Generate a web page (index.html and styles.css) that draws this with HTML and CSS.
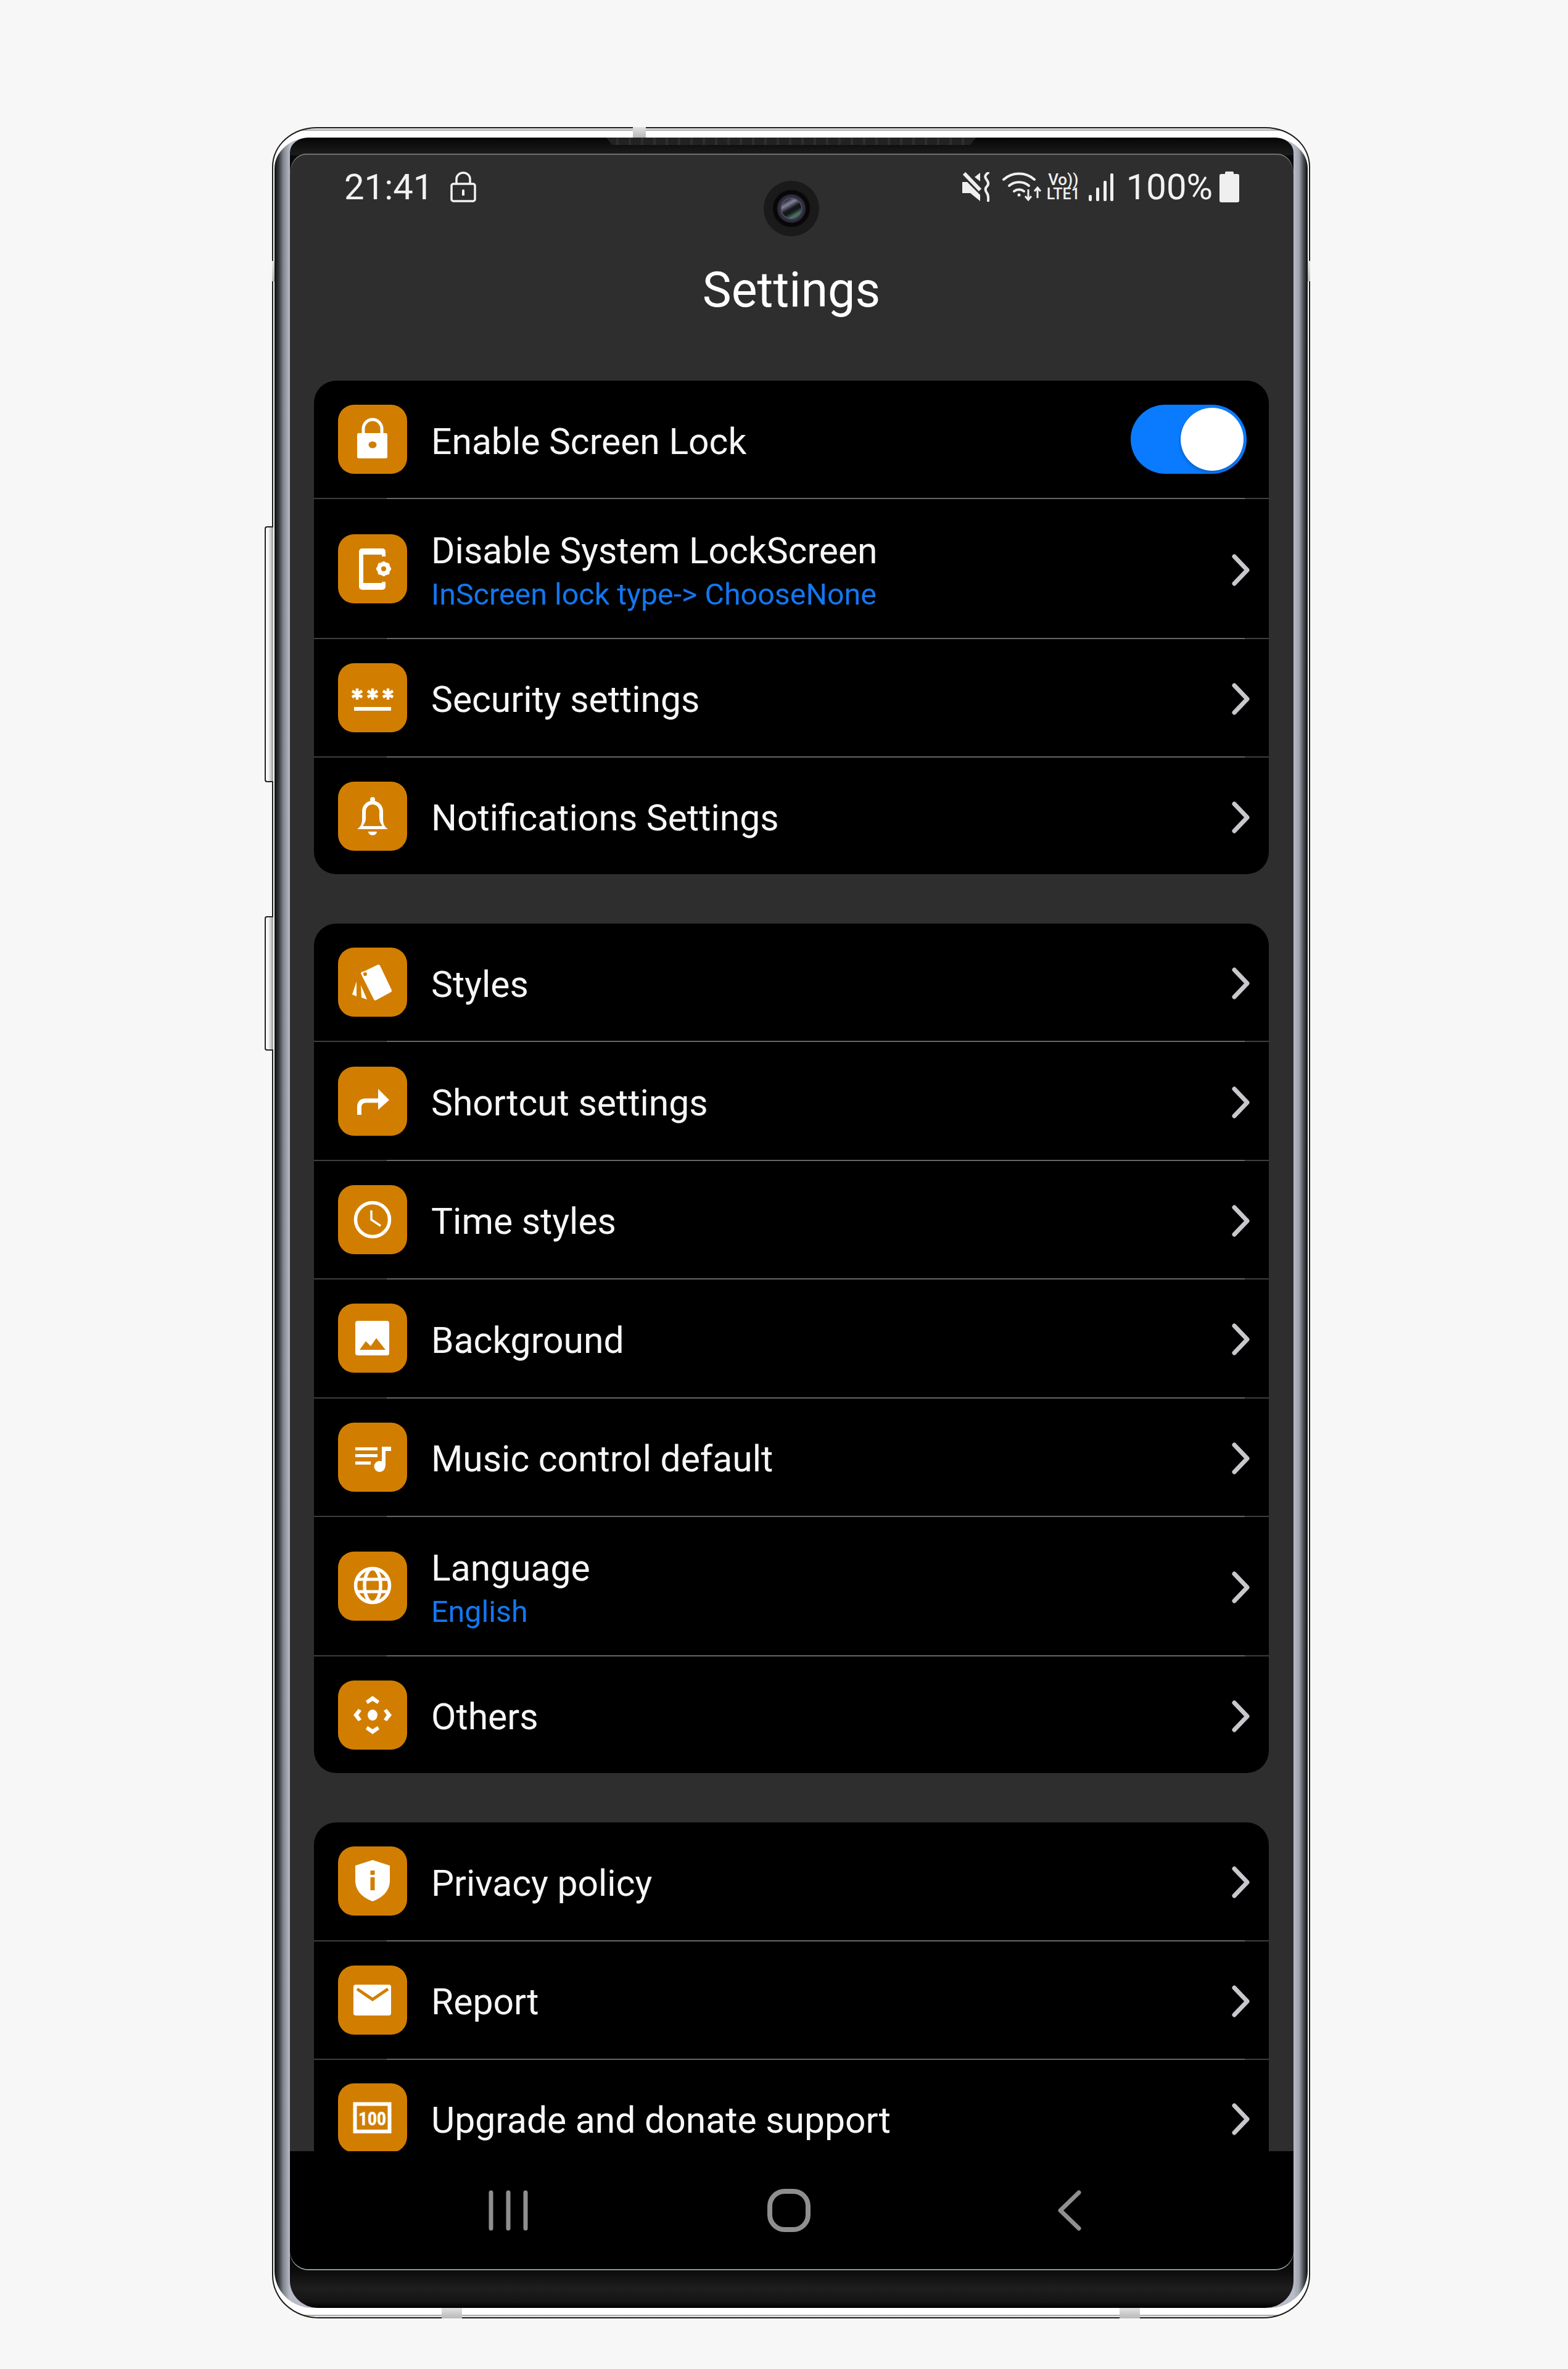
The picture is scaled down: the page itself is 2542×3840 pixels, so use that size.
FILE: index.html
```html
<!DOCTYPE html>
<html lang="en">
<head>
    <meta charset="UTF-8">
    <meta name="viewport" content="width=device-width, initial-scale=1.0">
    <title>Settings</title>
    <link rel="stylesheet" href="styles.css">
</head>
<body>
    <div class="page">
        <div class="phone">
            <!-- Side buttons and antenna bands -->
            <div class="side-btn side-btn-power"></div>
            <div class="side-btn side-btn-volume"></div>
            <div class="band band-top"></div>
            <div class="band band-left"></div>
            <div class="band band-right"></div>
            <div class="band band-bottom-a"></div>
            <div class="band band-bottom-b"></div>
            <div class="speaker"></div>

            <div class="bezel">
                <div class="screen">
                    <div class="camera"></div>

                    <div class="content">
                        <!-- Status bar -->
                        <div class="status-bar">
                            <div class="status-left">
                                <span class="status-text time">21:41</span>
                                <svg class="status-lock" width="42" height="50" viewBox="0 0 42 50" fill="none" stroke="#f2f2f2" stroke-width="3.5">
                                    <rect x="2" y="20" width="38" height="28" rx="3"/>
                                    <path d="M10 20V12a11 10 0 0 1 22 0v8"/>
                                    <path d="M21 31v8" stroke-width="4"/>
                                    <circle cx="21" cy="31" r="2" fill="#f2f2f2" stroke="none"/>
                                </svg>
                            </div>
                            <div class="status-right">
                                <svg class="status-mute" width="46" height="48" viewBox="0 0 46 48">
                                    <path d="M0 16h8L29 37v10L13 34H0z" fill="#efefef"/>
                                    <path d="M3 2L29 29" stroke="#efefef" stroke-width="6"/>
                                    <path d="M20 8l9-7v14z" fill="#efefef"/>
                                    <path d="M42 1c-7 5-5 8-2 12s3 7 0 10-3 7 0 11 2 8 2 13" fill="none" stroke="#efefef" stroke-width="4" stroke-linecap="round"/>
                                </svg>
                                <svg class="status-wifi" width="64" height="48" viewBox="0 0 64 48" fill="none" stroke="#efefef" stroke-width="4" stroke-linecap="round">
                                    <path d="M2 12a38 38 0 0 1 50 0"/>
                                    <path d="M11 22a25 25 0 0 1 32 0"/>
                                    <path d="M19 31a13 13 0 0 1 16 0"/>
                                    <circle cx="27" cy="37" r="2.5" fill="#efefef" stroke="none"/>
                                    <path d="M42 28v17M37 39l5 6 5-6M57 42V26M52 31l5-6 5 6" stroke-width="3" stroke-linecap="butt"/>
                                </svg>
                                <div class="status-net">
                                    <span class="net-vo">Vo))</span>
                                    <span class="net-lte">LTE1</span>
                                </div>
                                <svg class="status-signal" width="41" height="46" viewBox="0 0 41 46" fill="#efefef">
                                    <rect x="0" y="36" width="5" height="10" rx="2"/>
                                    <rect x="12" y="24" width="5" height="22" rx="2"/>
                                    <rect x="24" y="13" width="5" height="33" rx="2"/>
                                    <rect x="35" y="1" width="5" height="45" rx="2"/>
                                </svg>
                                <span class="status-text percent">100%</span>
                                <svg class="status-battery" width="32" height="50" viewBox="0 0 32 50" fill="#efefef">
                                    <rect x="9" y="0" width="14" height="6" rx="2"/>
                                    <rect x="0" y="4" width="32" height="46" rx="3"/>
                                </svg>
                            </div>
                        </div>

                        <h1 class="page-title">Settings</h1>

                        <!-- Lock group -->
                        <div class="card">
                            <div class="row">
                                <div class="tile">
                                    <svg width="112" height="112" viewBox="0 0 112 112" fill="#fff">
                                        <path d="M34 46h43a3 3 0 0 1 3 3v35a3 3 0 0 1-3 3H34a3 3 0 0 1-3-3V49a3 3 0 0 1 3-3z"/>
                                        <path d="M41 46V39a15 15 0 0 1 30 0v7" fill="none" stroke="#fff" stroke-width="5"/>
                                        <ellipse cx="56" cy="65" rx="6.5" ry="5.5" fill="#d17e00"/>
                                    </svg>
                                </div>
                                <div class="row-text"><div class="row-title">Enable Screen Lock</div></div>
                                <div class="toggle"><div class="toggle-knob"></div></div>
                            </div>
                            <div class="divider"></div>
                            <div class="row row-tall">
                                <div class="tile">
                                    <svg width="112" height="112" viewBox="0 0 112 112" fill="#fff">
                                        <path d="M39 23h33a5 5 0 0 1 5 5v8h-6v-3H41v46h30v-2h6v8a5 5 0 0 1-5 5H39a5 5 0 0 1-5-5V28a5 5 0 0 1 5-5z"/>
                                        <circle cx="74" cy="56" r="8" fill="none" stroke="#fff" stroke-width="6"/>
                                        <path d="M74 44v24M62 56h24M65.500 47.500l17 17M65.500 64.500l17-17" stroke="#fff" stroke-width="4" fill="none"/>
                                        <circle cx="74" cy="56" r="4" fill="#d17e00"/>
                                    </svg>
                                </div>
                                <div class="row-text">
                                    <div class="row-title">Disable System LockScreen</div>
                                    <div class="row-sub">InScreen lock type-&gt; ChooseNone</div>
                                </div>
                                <svg class="chevron" width="29" height="52" viewBox="0 0 29 52"><path d="M4 4l21 22L4 48"/></svg>
                            </div>
                            <div class="divider"></div>
                            <div class="row">
                                <div class="tile">
                                    <svg width="112" height="112" viewBox="0 0 112 112" fill="none" stroke="#fff">
                                        <path d="M31 41v18M23 45l16 10M23 55l16-10M56 41v18M48 45l16 10M48 55l16-10M81 41v18M73 45l16 10M73 55l16-10" stroke-width="4.500"/>
                                        <path d="M26 74h60" stroke-width="6"/>
                                    </svg>
                                </div>
                                <div class="row-text"><div class="row-title">Security settings</div></div>
                                <svg class="chevron" width="29" height="52" viewBox="0 0 29 52"><path d="M4 4l21 22L4 48"/></svg>
                            </div>
                            <div class="divider"></div>
                            <div class="row">
                                <div class="tile">
                                    <svg width="112" height="112" viewBox="0 0 112 112" fill="#fff">
                                        <path d="M31 77c6-4 8-9 8-16V48a17 17 0 0 1 34 0v13c0 7 2 12 8 16zM40 72h32c-3-4-5-8-5-12V48a11 11 0 0 0-22 0v12c0 4-2 8-5 12z" fill-rule="evenodd"/>
                                        <circle cx="56" cy="29" r="4"/>
                                        <path d="M49 81h14a7 6 0 0 1-14 0z"/>
                                    </svg>
                                </div>
                                <div class="row-text"><div class="row-title">Notifications Settings</div></div>
                                <svg class="chevron" width="29" height="52" viewBox="0 0 29 52"><path d="M4 4l21 22L4 48"/></svg>
                            </div>
                        </div>

                        <!-- Look and feel group -->
                        <div class="card">
                            <div class="row">
                                <div class="tile">
                                    <svg width="112" height="112" viewBox="0 0 112 112" fill="#fff">
                                        <path d="M41 39l23-11a3 3 0 0 1 4 1l19 40a3 3 0 0 1-1 3L62 85a3 3 0 0 1-4-1L38 44a3 3 0 0 1 3-5z"/>
                                        <circle cx="44" cy="43" r="3" fill="#d17e00"/>
                                        <path d="M30 55v24l-7-3z"/>
                                        <path d="M37 61l10 23-9-3z"/>
                                    </svg>
                                </div>
                                <div class="row-text"><div class="row-title">Styles</div></div>
                                <svg class="chevron" width="29" height="52" viewBox="0 0 29 52"><path d="M4 4l21 22L4 48"/></svg>
                            </div>
                            <div class="divider"></div>
                            <div class="row">
                                <div class="tile">
                                    <svg width="112" height="112" viewBox="0 0 112 112" fill="#fff">
                                        <path d="M34.500 78V66q0-11 11-11H67" fill="none" stroke="#fff" stroke-width="7"/>
                                        <path d="M65 36l18 18-18 16z"/>
                                    </svg>
                                </div>
                                <div class="row-text"><div class="row-title">Shortcut settings</div></div>
                                <svg class="chevron" width="29" height="52" viewBox="0 0 29 52"><path d="M4 4l21 22L4 48"/></svg>
                            </div>
                            <div class="divider"></div>
                            <div class="row">
                                <div class="tile">
                                    <svg width="112" height="112" viewBox="0 0 112 112" fill="none" stroke="#fff">
                                        <circle cx="56" cy="56" r="27.500" stroke-width="5.500"/>
                                        <path d="M54 41v15l15 10" stroke-width="3.500"/>
                                    </svg>
                                </div>
                                <div class="row-text"><div class="row-title">Time styles</div></div>
                                <svg class="chevron" width="29" height="52" viewBox="0 0 29 52"><path d="M4 4l21 22L4 48"/></svg>
                            </div>
                            <div class="divider"></div>
                            <div class="row">
                                <div class="tile">
                                    <svg width="112" height="112" viewBox="0 0 112 112">
                                        <rect x="28" y="28" width="55" height="56" rx="4" fill="#fff"/>
                                        <path d="M35 75l10-14 8 8 9-13 15 19z" fill="#d17e00"/>
                                    </svg>
                                </div>
                                <div class="row-text"><div class="row-title">Background</div></div>
                                <svg class="chevron" width="29" height="52" viewBox="0 0 29 52"><path d="M4 4l21 22L4 48"/></svg>
                            </div>
                            <div class="divider"></div>
                            <div class="row">
                                <div class="tile">
                                    <svg width="112" height="112" viewBox="0 0 112 112" fill="#fff">
                                        <path d="M28 40h36v5H28zM28 51h36v5H28zM28 63h25v5H28z"/>
                                        <path d="M71 39h15v7h-9v25h-6z"/>
                                        <circle cx="67.500" cy="71" r="9"/>
                                    </svg>
                                </div>
                                <div class="row-text"><div class="row-title">Music control default</div></div>
                                <svg class="chevron" width="29" height="52" viewBox="0 0 29 52"><path d="M4 4l21 22L4 48"/></svg>
                            </div>
                            <div class="divider"></div>
                            <div class="row row-tall">
                                <div class="tile">
                                    <svg width="112" height="112" viewBox="0 0 112 112" fill="none" stroke="#fff" stroke-width="5.500">
                                        <circle cx="56" cy="55" r="27.500"/>
                                        <ellipse cx="56" cy="55" rx="13" ry="27.500"/>
                                        <path d="M30 45h52M30 65h52" stroke-width="5"/>
                                    </svg>
                                </div>
                                <div class="row-text">
                                    <div class="row-title">Language</div>
                                    <div class="row-sub">English</div>
                                </div>
                                <svg class="chevron" width="29" height="52" viewBox="0 0 29 52"><path d="M4 4l21 22L4 48"/></svg>
                            </div>
                            <div class="divider"></div>
                            <div class="row">
                                <div class="tile">
                                    <svg width="112" height="112" viewBox="0 0 112 112" fill="#fff">
                                        <path d="M56 25l11 8-3 5-8-5-8 5-3-5zM56 87l11-8-3-5-8 5-8-5-3 5zM25 56l8-10 5 3-5 7 5 7-5 3zM87 56l-8-10-5 3 5 7-5 7 5 3z"/>
                                        <ellipse cx="56" cy="56" rx="8" ry="9"/>
                                    </svg>
                                </div>
                                <div class="row-text"><div class="row-title">Others</div></div>
                                <svg class="chevron" width="29" height="52" viewBox="0 0 29 52"><path d="M4 4l21 22L4 48"/></svg>
                            </div>
                        </div>

                        <!-- About group -->
                        <div class="card">
                            <div class="row">
                                <div class="tile">
                                    <svg width="112" height="112" viewBox="0 0 112 112" fill="#fff">
                                        <path d="M56 22l28 9v24c0 17-12 28-28 34-16-6-28-17-28-34V31z"/>
                                        <path d="M52.500 50h7v21h-7zM52.500 39h7v7h-7z" fill="#d17e00"/>
                                    </svg>
                                </div>
                                <div class="row-text"><div class="row-title">Privacy policy</div></div>
                                <svg class="chevron" width="29" height="52" viewBox="0 0 29 52"><path d="M4 4l21 22L4 48"/></svg>
                            </div>
                            <div class="divider"></div>
                            <div class="row">
                                <div class="tile">
                                    <svg width="112" height="112" viewBox="0 0 112 112">
                                        <rect x="25" y="31" width="61" height="50" rx="4" fill="#fff"/>
                                        <path d="M31 38l25 17 25-17" fill="none" stroke="#d17e00" stroke-width="5"/>
                                    </svg>
                                </div>
                                <div class="row-text"><div class="row-title">Report</div></div>
                                <svg class="chevron" width="29" height="52" viewBox="0 0 29 52"><path d="M4 4l21 22L4 48"/></svg>
                            </div>
                            <div class="divider"></div>
                            <div class="row">
                                <div class="tile">
                                    <svg width="112" height="112" viewBox="0 0 112 112">
                                        <rect x="27.500" y="33.500" width="56" height="44.500" fill="none" stroke="#fff" stroke-width="6"/>
                                        <text x="33" y="68" font-family="Roboto" font-weight="900" font-size="32" fill="#fff" textLength="45" lengthAdjust="spacingAndGlyphs">100</text>
                                    </svg>
                                </div>
                                <div class="row-text"><div class="row-title">Upgrade and donate support</div></div>
                                <svg class="chevron" width="29" height="52" viewBox="0 0 29 52"><path d="M4 4l21 22L4 48"/></svg>
                            </div>
                        </div>
                    </div>

                    <!-- Android nav bar -->
                    <div class="nav-bar">
                        <svg class="nav-icon" width="64" height="66" viewBox="0 0 64 66" fill="none" stroke="#8f8f8f" stroke-width="7" stroke-linecap="round">
                            <path d="M4 4v58M32 4v58M60 4v58"/>
                        </svg>
                        <svg class="nav-icon" width="70" height="70" viewBox="0 0 70 70" fill="none" stroke="#8f8f8f" stroke-width="8">
                            <rect x="4" y="4" width="62" height="62" rx="24"/>
                        </svg>
                        <svg class="nav-icon" width="40" height="66" viewBox="0 0 40 66" fill="none" stroke="#8f8f8f" stroke-width="7" stroke-linecap="round" stroke-linejoin="round">
                            <path d="M35 4L5 33l30 29"/>
                        </svg>
                    </div>
                </div>
            </div>
        </div>
    </div>
</body>
</html>
```

FILE: styles.css
```css
/* General Styles */
body {
    margin: 0;
    background: #f7f7f7;
    font-family: Roboto, "Liberation Sans", sans-serif;
    color: #f4f4f4;
}

.page {
    height: 3840px;
    box-sizing: border-box;
    padding: 206px 0 0 441px;
    overflow: hidden;
}

/* Phone body */
.phone {
    position: relative;
    box-sizing: border-box;
    width: 1683px;
    height: 3552px;
    padding: 15px 2px;
    border: 2px solid #1c1c1c;
    border-radius: 72px 72px 76px 76px / 64px 64px 70px 70px;
    background: linear-gradient(to bottom, #e8e8e8, #e8e8e8 2px, #666 3px, #fff 4px, #fff calc(100% - 4px), #666 calc(100% - 3px), #e8e8e8 calc(100% - 2px));
}

.bezel {
    position: relative;
    display: flex;
    box-sizing: border-box;
    height: 100%;
    padding: 28px 23px 63px 25px;
    border-radius: 58px 58px 62px 62px / 50px 50px 60px 60px;
    background: linear-gradient(to right, #0d0d0d, #36383c 7px, #7f838c 14px, #b8bcc8 25px, #b8bcc8 calc(100% - 23px), #a0a4ae calc(100% - 14px), #4c4e54 calc(100% - 7px), #0d0d0d);
}

/* Black glass behind the screen, the metal shows round its corners */
.bezel::before {
    content: "";
    position: absolute;
    top: 0;
    right: 23px;
    bottom: 0;
    left: 25px;
    border-radius: 30px 30px 46px 46px / 24px 24px 44px 44px;
    background: linear-gradient(to bottom, #050505, #141414 17px, #1c1c1c 28px, #0a0a0a 29px, #0a0a0a calc(100% - 63px), #1e1e1e calc(100% - 32px), #141414 calc(100% - 10px), #000);
}

.side-btn {
    position: absolute;
    left: -14px;
    width: 12px;
    border: 2px solid #222;
    border-right: none;
    border-radius: 4px 0 0 4px;
    background: linear-gradient(to right, #fff, #f0f0f0 40%, #9a9a9a);
}

.side-btn-power {
    top: 645px;
    height: 411px;
}

.side-btn-volume {
    top: 1277px;
    height: 214px;
}

/* Antenna bands */
.band {
    position: absolute;
    background: linear-gradient(to bottom, #e2e2e2, #b8b8b8);
}

.band-top {
    top: -2px;
    left: 583px;
    width: 21px;
    height: 17px;
}

.band-left {
    top: 215px;
    left: -2px;
    width: 6px;
    height: 33px;
}

.band-right {
    top: 215px;
    right: -2px;
    width: 6px;
    height: 33px;
}

.band-bottom-a {
    bottom: -2px;
    left: 273px;
    width: 33px;
    height: 17px;
}

.band-bottom-b {
    bottom: -2px;
    left: 1372px;
    width: 33px;
    height: 17px;
}

.speaker {
    position: absolute;
    z-index: 2;
    top: 15px;
    left: 540px;
    width: 599px;
    height: 12px;
    background: repeating-linear-gradient(to right, #222 0 16px, #2e2e2e 16px 20px);
    clip-path: polygon(0 0, 100% 0, 98.500% 100%, 1.500% 100%);
}

/* Screen */
.screen {
    position: relative;
    z-index: 1;
    display: flex;
    flex-direction: column;
    flex: 1;
    min-width: 0;
    overflow: hidden;
    border-radius: 26px 26px 30px 30px / 32px 32px 30px 30px;
    background: #2e2e2e;
    box-shadow: 0 -2px 0 #707070, 0 2px 0 #8a9a9a;
}

.content {
    flex: 1;
    min-height: 0;
    overflow: hidden;
    padding: 0 40px 0 39px;
}

.camera {
    position: absolute;
    top: 42px;
    left: 768px;
    width: 90px;
    height: 90px;
    border-radius: 50%;
    background: radial-gradient(circle at 50% 50%, #000 0 14px, #15151c 15px, #3a3648 17px, #2b2838 22px, #070707 24px, #070707 29px, #1a1a1a 31px);
}

.camera::after {
    content: "";
    position: absolute;
    top: 29px;
    left: 29px;
    width: 32px;
    height: 32px;
    border-radius: 50%;
    background: linear-gradient(150deg, #1c2028 12%, #85849c 30%, #14181c 50%, #14181c 62%, #4e7a64 80%, #1c2028);
    box-shadow: 0 0 0 1px #5a6a70;
}

/* Status bar */
.status-bar {
    display: flex;
    align-items: center;
    justify-content: space-between;
    height: 104px;
    margin: 0 48px 0 49px;
}

.status-left,
.status-right {
    display: flex;
    align-items: center;
}

.status-text {
    font-size: 58px;
    color: #f2f2f2;
    line-height: 60px;
}

.status-lock {
    margin-left: 28px;
}

.status-wifi {
    margin-left: 19px;
}

.status-net {
    display: flex;
    flex-direction: column;
    align-items: center;
    margin-left: 8px;
    color: #efefef;
    line-height: 24px;
}

.net-vo {
    font-size: 26px;
    font-weight: 500;
}

.net-lte {
    font-size: 25px;
    font-weight: 500;
}

.status-signal {
    margin-left: 14px;
}

.percent {
    margin-left: 20px;
}

.status-battery {
    margin-left: 11px;
}

.page-title {
    margin: 65px 0 97px;
    font-size: 79px;
    font-weight: 400;
    line-height: 100px;
    text-align: center;
    color: #fff;
}

/* Setting cards */
.card {
    margin-bottom: 80px;
    overflow: hidden;
    border-radius: 36px;
    background: #000;
}

.row {
    display: flex;
    align-items: center;
    box-sizing: border-box;
    height: 190.4px;
    padding: 0 31px 0 39px;
}

.row:last-child {
    height: 188.8px;
}

.row-tall {
    height: 224.4px;
}

.divider {
    height: 2px;
    background: linear-gradient(to right, #3e3e3e 118px, #666 118px, #666 calc(100% - 39px), #3e3e3e calc(100% - 39px));
}

.tile {
    flex-shrink: 0;
    width: 112px;
    height: 112px;
    border-radius: 26px;
    background: #d17e00;
}

.tile svg {
    display: block;
}

.row-text {
    flex: 1;
    min-width: 0;
    margin-left: 39px;
    padding-top: 7px;
}

.row-title {
    font-size: 58.8px;
    line-height: 70px;
    color: #f6f6f6;
}

.row-sub {
    margin-top: 7px;
    font-size: 48.4px;
    line-height: 58px;
    color: #1277f0;
}

.chevron {
    flex-shrink: 0;
    margin-top: 4px;
    fill: none;
    stroke: #c9c7cc;
    stroke-width: 7;
    stroke-linecap: round;
    stroke-linejoin: round;
}

/* Toggle */
.toggle {
    box-sizing: border-box;
    display: flex;
    justify-content: flex-end;
    align-items: center;
    width: 188px;
    height: 112px;
    margin-right: 5px;
    padding-right: 5px;
    border-radius: 56px;
    background: #0a7aff;
}

.toggle-knob {
    width: 102px;
    height: 102px;
    border-radius: 50%;
    background: #fff;
    box-shadow: -1px 3px 4px rgba(0, 0, 0, 0.2);
}

/* Nav bar */
.nav-bar {
    display: grid;
    grid-template-columns: repeat(3, 455px);
    justify-content: center;
    justify-items: center;
    align-items: center;
    flex-shrink: 0;
    height: 191px;
    padding-right: 10px;
    background: #000;
}
```
